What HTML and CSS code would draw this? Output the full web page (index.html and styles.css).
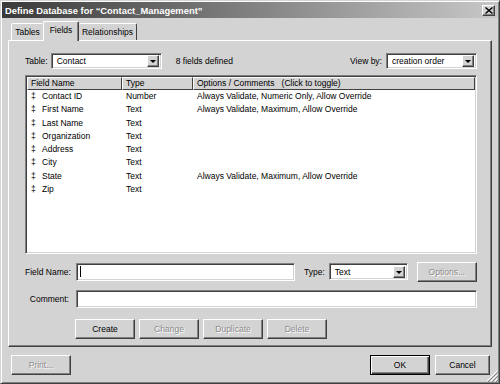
FILE: index.html
```html
<!DOCTYPE html>
<html lang="en">
<head>
    <meta charset="UTF-8">
    <title>Define Database</title>
    <link rel="stylesheet" href="styles.css">
</head>
<body>
    <div class="window">
        <div class="titlebar">
            <span class="title">Define Database for “Contact_Management”</span>
            <span class="close">
                <svg width="8" height="7" viewBox="0 0 8 7"><path d="M0.5 0.5 L7.5 6.5 M7.5 0.5 L0.5 6.5" stroke="#000" stroke-width="1.4"/></svg>
            </span>
        </div>
        <div class="tabs">
            <div class="tab tab-tables">Tables</div>
            <div class="tab active">Fields</div>
            <div class="tab tab-rel">Relationships</div>
        </div>
        <div class="panel">
            <div class="top-row">
                <span class="lbl">Table:</span>
                <div class="select sunken table-select"><span class="val">Contact</span><span class="drop"></span></div>
                <span class="count">8 fields defined</span>
                <span class="lbl view-lbl">View by:</span>
                <div class="select sunken view-select"><span class="val">creation order</span><span class="drop"></span></div>
            </div>
            <div class="list sunken">
                <div class="list-head">
                    <div class="hcell c1">Field Name</div>
                    <div class="hcell c2">Type</div>
                    <div class="hcell c3">Options / Comments   (Click to toggle)</div>
                </div>
                <div class="row"><span class="c1"><i>‡</i>Contact ID</span><span class="c2">Number</span><span class="c3">Always Validate, Numeric Only, Allow Override</span></div>
                <div class="row"><span class="c1"><i>‡</i>First Name</span><span class="c2">Text</span><span class="c3">Always Validate, Maximum, Allow Override</span></div>
                <div class="row"><span class="c1"><i>‡</i>Last Name</span><span class="c2">Text</span><span class="c3"></span></div>
                <div class="row"><span class="c1"><i>‡</i>Organization</span><span class="c2">Text</span><span class="c3"></span></div>
                <div class="row"><span class="c1"><i>‡</i>Address</span><span class="c2">Text</span><span class="c3"></span></div>
                <div class="row"><span class="c1"><i>‡</i>City</span><span class="c2">Text</span><span class="c3"></span></div>
                <div class="row"><span class="c1"><i>‡</i>State</span><span class="c2">Text</span><span class="c3">Always Validate, Maximum, Allow Override</span></div>
                <div class="row"><span class="c1"><i>‡</i>Zip</span><span class="c2">Text</span><span class="c3"></span></div>
            </div>
            <div class="form-row">
                <span class="flabel">Field Name:</span>
                <div class="input sunken name-input"><span class="caret"></span></div>
                <span class="lbl type-lbl">Type:</span>
                <div class="select sunken type-select"><span class="val">Text</span><span class="drop"></span></div>
                <button class="btn options-btn" disabled>Options...</button>
            </div>
            <div class="form-row comment-row">
                <span class="flabel">Comment:</span>
                <div class="input sunken comment-input"></div>
            </div>
            <div class="button-row">
                <button class="btn">Create</button>
                <button class="btn" disabled>Change</button>
                <button class="btn" disabled>Duplicate</button>
                <button class="btn" disabled>Delete</button>
            </div>
        </div>
        <div class="footer">
            <button class="btn" disabled>Print...</button>
            <button class="btn default ok-btn">OK</button>
            <button class="btn cancel-btn">Cancel</button>
        </div>
        <svg class="grip" width="12" height="12" viewBox="0 0 12 12">
            <path d="M11 1 L1 11 M11 5 L5 11 M11 9 L9 11" stroke="#fff" stroke-width="1"/>
            <path d="M12 2 L2 12 M12 6 L6 12 M12 10 L10 12" stroke="#808080" stroke-width="1"/>
        </svg>
    </div>
</body>
</html>
```

FILE: styles.css
```css
html, body {
    margin: 0;
}
body {
    font-family: "Liberation Sans", Arial, sans-serif;
    font-size: 8.5px;
    color: #000;
    background: #d3d3d3;
}
.window {
    position: relative;
    width: 500px;
    height: 384px;
    box-sizing: border-box;
    background: #d3d3d3;
    border: 1px solid;
    border-color: #d3d3d3 #404040 #404040 #d3d3d3;
    box-shadow: inset 1px 1px #fff, inset -1px -1px #808080;
    padding: 1px;
    display: flex;
    flex-direction: column;
}
.titlebar {
    flex: none;
    height: 16px;
    display: flex;
    align-items: center;
    padding: 0 3px;
    background: linear-gradient(to right, #3a3a3a, #c8c8c8);
}
.title {
    flex: 1;
    color: #fff;
    font-weight: bold;
    font-size: 9.4px;
}
.close {
    width: 13px;
    height: 11px;
    box-sizing: border-box;
    display: flex;
    align-items: center;
    justify-content: center;
    background: #d3d3d3;
    border: 1px solid;
    border-color: #fff #404040 #404040 #fff;
    box-shadow: inset -1px -1px #808080;
}

/* tabs */
.tabs {
    flex: none;
    display: flex;
    align-items: flex-end;
    height: 19px;
    margin-top: 3px;
    padding-left: 9px;
}
.tab {
    height: 17px;
    box-sizing: border-box;
    display: flex;
    align-items: center;
    justify-content: center;
    background: #d3d3d3;
    border-top: 1px solid #fff;
    border-left: 1px solid #fff;
    border-right: 1px solid #404040;
    border-radius: 2px 2px 0 0;
}
.tab-tables {
    width: 32px;
    border-right: none;
}
.tab-rel {
    width: 58px;
    border-left: none;
}
.tab.active {
    position: relative;
    z-index: 1;
    width: 36px;
    height: 20px;
    margin-bottom: -1px;
    padding-bottom: 3px;
    box-shadow: inset -1px 0 #808080;
}

.panel {
    flex: none;
    height: 307px;
    box-sizing: border-box;
    margin: 0 6px;
    border: 1px solid;
    border-color: #fff #404040 #404040 #fff;
    box-shadow: inset -1px -1px #808080;
    padding: 12px 14px 0 16px;
    display: flex;
    flex-direction: column;
}

.sunken {
    box-sizing: border-box;
    background: #fff;
    border: 1px solid;
    border-color: #808080 #fff #fff #808080;
    box-shadow: inset 1px 1px #404040, inset -1px -1px #d3d3d3;
}

/* dropdowns */
.select {
    height: 16px;
    display: flex;
    align-items: center;
    padding: 1px 2px 1px 1px;
}
.select .val {
    flex: 1;
    padding-left: 4px;
    white-space: nowrap;
}
.drop {
    position: relative;
    width: 12px;
    height: 12px;
    box-sizing: border-box;
    background: #d3d3d3;
    border: 1px solid;
    border-color: #fff #404040 #404040 #fff;
    box-shadow: inset -1px -1px #808080;
}
.drop::after {
    content: "";
    position: absolute;
    left: 2px;
    top: 4px;
    border-left: 3px solid transparent;
    border-right: 3px solid transparent;
    border-top: 3px solid #000;
}

.top-row {
    flex: none;
    height: 16px;
    display: flex;
    align-items: center;
}
.lbl {
    margin-right: 3px;
    white-space: nowrap;
}
.table-select {
    width: 111px;
}
.count {
    margin-left: 14px;
}
.view-lbl {
    margin-left: auto;
    margin-right: 4px;
}
.view-select {
    width: 91px;
}

/* field list */
.list {
    flex: none;
    height: 179px;
    margin-top: 6px;
    padding: 1px;
    display: flex;
    flex-direction: column;
}
.list-head {
    display: flex;
    height: 13px;
    flex: none;
}
.hcell {
    box-sizing: border-box;
    height: 13px;
    line-height: 11px;
    padding-left: 3px;
    background: #d3d3d3;
    border: 1px solid;
    border-color: #fff #404040 #404040 #fff;
    white-space: pre;
}
.c1 {
    width: 95px;
    flex: none;
}
.c2 {
    width: 71px;
    flex: none;
}
.c3 {
    flex: 1;
}
.row {
    display: flex;
    height: 13.3px;
    line-height: 13.3px;
    white-space: nowrap;
}
.row span {
    padding-left: 4px;
    box-sizing: border-box;
}
.row i {
    font-style: normal;
    display: inline-block;
    width: 11px;
}

/* entry rows */
.form-row {
    flex: none;
    height: 19px;
    margin-top: 8px;
    display: flex;
    align-items: center;
}
.comment-row {
    margin-top: 8px;
}
.flabel {
    width: 44px;
    margin-right: 7px;
    text-align: right;
    white-space: nowrap;
}
.input {
    height: 18px;
    display: flex;
    align-items: center;
}
.name-input {
    width: 219px;
}
.comment-input {
    flex: 1;
}
.caret {
    width: 1px;
    height: 11px;
    margin-left: 3px;
    background: #000;
}
.type-lbl {
    margin-left: 9px;
    margin-right: 4px;
}
.type-select {
    width: 79px;
    height: 17px;
}
.options-btn {
    width: 59px;
    height: 19px;
    margin-left: 9px;
}

.btn {
    box-sizing: border-box;
    height: 20px;
    width: 60px;
    padding: 0;
    font-family: inherit;
    font-size: inherit;
    color: #000;
    background: #d3d3d3;
    border: 1px solid;
    border-color: #fff #404040 #404040 #fff;
    box-shadow: inset -1px -1px #808080;
    border-radius: 0;
}
.btn:disabled {
    color: #8c8c8c;
    text-shadow: 1px 1px #fff;
}
.btn.default {
    border-color: #000;
    box-shadow: inset 1px 1px #fff, inset -1px -1px #404040, inset -2px -2px #808080;
}
.button-row {
    flex: none;
    display: flex;
    gap: 4px;
    margin-top: 11px;
    padding-left: 50px;
}

.footer {
    flex: none;
    display: flex;
    gap: 5px;
    padding: 8px 8px 0 9px;
}
.ok-btn {
    margin-left: auto;
}
.cancel-btn {
    width: 55px;
}
.grip {
    position: absolute;
    right: 1px;
    bottom: 1px;
}
```
